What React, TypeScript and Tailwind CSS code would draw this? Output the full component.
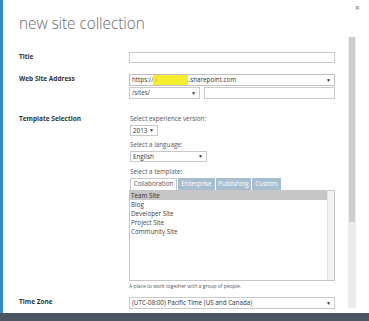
import React from "react";

const font = { fontFamily: '"Open Sans", "Noto Sans", sans-serif' };

const Arrow: React.FC = () => (
  <span className="text-[5px] leading-none text-[#333] pr-[3px]">▼</span>
);

const Row: React.FC<{ label: string; className?: string; children: React.ReactNode }> = ({
  label,
  className,
  children,
}) => (
  <div className={"flex " + (className ?? "")}>
    <div className="w-[110px] shrink-0 text-[6.5px] font-bold text-[#333] leading-[10px]">{label}</div>
    <div className="w-[206px]">{children}</div>
  </div>
);

const App: React.FC = () => {
  return (
    <div className="w-[369px] h-[321px] bg-white flex flex-col overflow-hidden" style={font}>
      <div className="flex flex-1 relative">
        <div className="w-[3px] bg-[#2b8bd3]" />
        <span className="absolute right-[9px] top-[1px] text-[9px] text-[#777]">×</span>

        <div className="w-[345px] pl-4">
          <h1 className="text-[15.5px] font-light text-[#6b6b6b] leading-[20px] mt-[13px] tracking-[-0.1px]">
            new site collection
          </h1>

          <Row label="Title" className="mt-[19px]">
            <div className="h-[11px] border border-[#c9c9c9]" />
          </Row>

          <Row label="Web Site Address" className="mt-[11px]">
            <div className="h-[12px] border border-[#c0c0c0] flex items-center justify-between text-[6.3px] text-[#333] pl-[2px]">
              <span className="flex items-center">
                https://
                <span className="bg-[#f4ee2a] text-[#c9c27a] px-[1px] w-[35px] overflow-hidden whitespace-nowrap">
                  k
                </span>
                .sharepoint.com
              </span>
              <Arrow />
            </div>
            <div className="flex gap-[4px] mt-[1px]">
              <div className="w-[71px] h-[12px] border border-[#c9c9c9] flex items-center justify-between text-[6.3px] text-[#444] pl-[2px]">
                /sites/
                <Arrow />
              </div>
              <div className="flex-1 h-[12px] border border-[#c9c9c9]" />
            </div>
          </Row>

          <Row label="Template Selection" className="mt-[15px]">
            <div className="text-[6.3px] text-[#555] leading-[10px] pl-[1px]">Select experience version:</div>
            <div className="ml-[1px] mt-[1px] w-[28px] h-[11px] border border-[#c9c9c9] flex items-center justify-between text-[6.3px] text-[#333] pl-[2px]">
              2013
              <Arrow />
            </div>
            <div className="text-[6.3px] text-[#555] leading-[10px] pl-[1px] mt-[4px]">Select a language:</div>
            <div className="ml-[1px] mt-[1px] w-[77px] h-[11px] border border-[#c9c9c9] flex items-center justify-between text-[6.3px] text-[#333] pl-[2px]">
              English
              <Arrow />
            </div>
            <div className="text-[6.3px] text-[#555] leading-[10px] pl-[1px] mt-[5px]">Select a template:</div>
            <div className="flex mt-[1px] ml-[1px] h-[12px] text-[6.3px] leading-none">
              <div className="w-[47px] border border-b-0 border-[#c9c9c9] bg-white text-[#555] flex items-center justify-center">
                Collaboration
              </div>
              <div className="w-[37px] ml-[1px] bg-[#a7bed1] text-white flex items-center justify-center">Enterprise</div>
              <div className="w-[35px] ml-[1px] bg-[#a7bed1] text-white flex items-center justify-center">Publishing</div>
              <div className="w-[29px] ml-[1px] bg-[#a7bed1] text-white flex items-center justify-center">Custom</div>
            </div>
            <div className="h-[91px] border border-[#c6c6c6] flex text-[6.3px] text-[#444] leading-[9px]">
              <div className="flex-1">
                <div className="bg-[#c6c6c6] pl-[1px] text-[#333]">Team Site</div>
                <div className="pl-[1px]">Blog</div>
                <div className="pl-[1px]">Developer Site</div>
                <div className="pl-[1px]">Project Site</div>
                <div className="pl-[1px]">Community Site</div>
              </div>
              <div className="w-[7px] bg-[#f3f3f3] border-l border-[#e2e2e2]" />
            </div>
            <div className="text-[5px] text-[#555] leading-[8px] mt-[1px]">
              A place to work together with a group of people.
            </div>
          </Row>

          <Row label="Time Zone" className="mt-[7px]">
            <div className="h-[12px] border border-[#c9c9c9] flex items-center justify-between text-[6.3px] text-[#333] pl-[2px]">
              (UTC-08:00) Pacific Time (US and Canada)
              <Arrow />
            </div>
          </Row>
        </div>

        <div className="w-[8px] mt-[37px] mb-[5px] bg-[#ececec] flex justify-center">
          <div className="w-[6px] h-[185px] bg-[#cdcdcd]" />
        </div>
      </div>
      <div className="h-[8px] bg-[#4a5561]" />
    </div>
  );
};

export default App;
